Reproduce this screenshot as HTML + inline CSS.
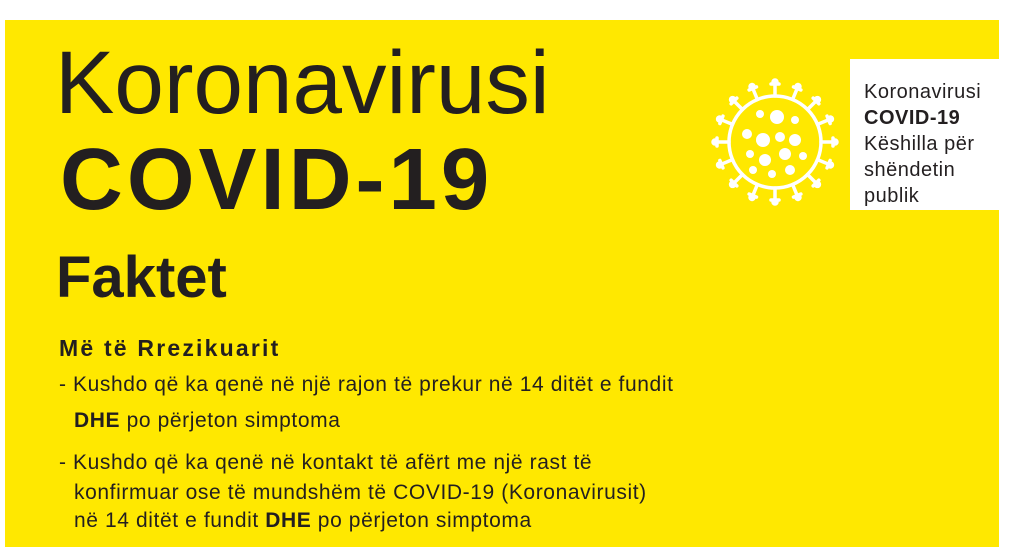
<!DOCTYPE html><html><head><style>
body{margin:0;width:1012px;height:547px;background:#fff;position:relative;overflow:hidden;font-family:"Liberation Sans",sans-serif;color:#231f20}
.y{position:absolute;left:5px;top:20px;width:994px;height:527px;background:#ffe800}
.a{position:absolute;white-space:nowrap}
.w{position:absolute;left:850px;top:59px;width:150px;height:151px;background:#fff;font-size:20px;letter-spacing:0.5px;line-height:26px;padding:20px 0 0 14px;box-sizing:border-box}
.l{font-size:21px;letter-spacing:0.6px;line-height:26px}
</style></head><body>
<div class="y"></div>
<div class="a" style="left:55px;top:32px;font-size:89px;line-height:100px">Koronavirusi</div>
<div class="a" style="left:60px;top:130px;font-size:87px;font-weight:bold;line-height:100px;letter-spacing:4px">COVID-19</div>
<div class="a" style="left:56px;top:248px;font-size:58px;font-weight:bold;line-height:60px">Faktet</div>
<div class="a" style="left:59px;top:335px;font-size:23px;font-weight:bold;letter-spacing:2.2px">Më të Rrezikuarit</div>
<div class="a l" style="left:59px;top:372px">- Kushdo që ka qenë në një rajon të prekur në 14 ditët e fundit</div>
<div class="a l" style="left:74px;top:408px"><b>DHE</b> po përjeton simptoma</div>
<div class="a l" style="left:59px;top:450px">- Kushdo që ka qenë në kontakt të afërt me një rast të</div>
<div class="a l" style="left:74px;top:480px">konfirmuar ose të mundshëm të COVID-19 (Koronavirusit)</div>
<div class="a l" style="left:74px;top:508px">në 14 ditët e fundit <b>DHE</b> po përjeton simptoma</div>
<div class="w">Koronavirusi<br><b>COVID-19</b><br>Këshilla për<br>shëndetin<br>publik</div>
<svg style="position:absolute;left:705px;top:72px" width="140" height="140" viewBox="-70 -70 140 140">
<g stroke="#fff" stroke-width="3.5" fill="none" stroke-linecap="round">
<circle r="46"/>
<g id="s"><line x1="0" y1="-46" x2="0" y2="-58"/><line x1="-4" y1="-58" x2="4" y2="-58"/><circle cx="0" cy="-60" r="2" fill="#fff"/></g>
<use href="#s" transform="rotate(22.5)"/><use href="#s" transform="rotate(45)"/><use href="#s" transform="rotate(67.5)"/><use href="#s" transform="rotate(90)"/><use href="#s" transform="rotate(112.5)"/><use href="#s" transform="rotate(135)"/><use href="#s" transform="rotate(157.5)"/><use href="#s" transform="rotate(180)"/><use href="#s" transform="rotate(202.5)"/><use href="#s" transform="rotate(225)"/><use href="#s" transform="rotate(247.5)"/><use href="#s" transform="rotate(270)"/><use href="#s" transform="rotate(292.5)"/><use href="#s" transform="rotate(315)"/><use href="#s" transform="rotate(337.5)"/>
</g>
<g fill="#fff">
<circle cx="-15" cy="-28" r="4"/><circle cx="2" cy="-25" r="7"/><circle cx="20" cy="-22" r="4"/>
<circle cx="-28" cy="-8" r="5"/><circle cx="-12" cy="-2" r="7"/><circle cx="5" cy="-5" r="5"/><circle cx="20" cy="-2" r="6"/>
<circle cx="-25" cy="12" r="4"/><circle cx="-10" cy="18" r="6"/><circle cx="10" cy="12" r="6"/><circle cx="28" cy="14" r="4"/>
<circle cx="-22" cy="28" r="4"/><circle cx="-3" cy="32" r="4"/><circle cx="15" cy="28" r="5"/>
</g></svg>
</body></html>
